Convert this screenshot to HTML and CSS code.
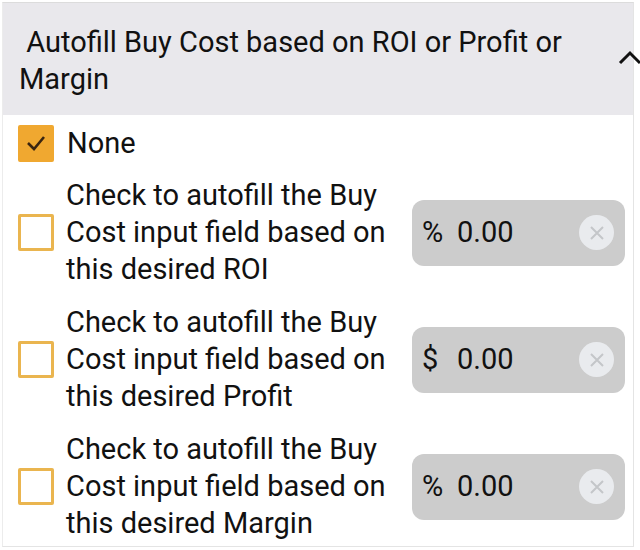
FILE: index.html
```html
<!DOCTYPE html>
<html>
<head>
<meta charset="utf-8">
<link rel="stylesheet" href="styles.css">
</head>
<body>
<div class="panel">
  <div class="header">
    <div class="title">&nbsp;Autofill Buy Cost based on ROI or Profit or Margin</div>
    <svg class="chev" width="26" height="18" viewBox="0 0 26 18"><path d="M2 15 L12 5 L22 15" fill="none" stroke="#111" stroke-width="3"/></svg>
  </div>
  <div class="body">
    <div class="none-row">
      <span class="box checked"><svg width="22" height="18" viewBox="0 0 22 18"><path d="M3 9 L9 15 L19 3" fill="none" stroke="#3a2510" stroke-width="2.6"/></svg></span>
      <span class="label">None</span>
    </div>
    <div class="row">
      <span class="box"></span>
      <div class="text">Check to autofill the Buy Cost input field based on this desired ROI</div>
      <div class="field"><span class="unit">%</span><span class="val">0.00</span><span class="clear"><svg width="16" height="16" viewBox="0 0 16 16"><path d="M2 2 L14 14 M14 2 L2 14" stroke="#c4c6c9" stroke-width="2"/></svg></span></div>
    </div>
    <div class="row">
      <span class="box"></span>
      <div class="text">Check to autofill the Buy Cost input field based on this desired Profit</div>
      <div class="field"><span class="unit">$</span><span class="val">0.00</span><span class="clear"><svg width="16" height="16" viewBox="0 0 16 16"><path d="M2 2 L14 14 M14 2 L2 14" stroke="#c4c6c9" stroke-width="2"/></svg></span></div>
    </div>
    <div class="row">
      <span class="box"></span>
      <div class="text">Check to autofill the Buy Cost input field based on this desired Margin</div>
      <div class="field"><span class="unit">%</span><span class="val">0.00</span><span class="clear"><svg width="16" height="16" viewBox="0 0 16 16"><path d="M2 2 L14 14 M14 2 L2 14" stroke="#c4c6c9" stroke-width="2"/></svg></span></div>
    </div>
  </div>
</div>
</body>
</html>
```
FILE: styles.css
```css
html, body {
  margin: 0;
  padding: 0;
  background: #fff;
  overflow: hidden;
}
body {
  font-family: Roboto, "Noto Sans", sans-serif;
  color: #111;
  font-size: 29px;
  line-height: 37px;
}
.panel {
  margin-top: 2px;
  margin-left: 2px;
  width: 630px;
  border-top: 1px solid #dcdcdc;
  border-left: 1px solid #ececec;
  border-right: 1px solid #e4e4e4;
  border-bottom: 1px solid #e4e4e4;
  height: 543px;
}
.header {
  background: #e9e8ec;
  display: flex;
  align-items: center;
  padding: 21px 0 17px 16px;
}
.title {
  width: 570px;
  flex: none;
}
.chev {
  margin-left: 29px;
  margin-right: -20px;
  margin-top: -8px;
  flex: none;
}
.body {
  padding: 8px 0 0 15px;
}
.none-row {
  display: flex;
  align-items: center;
  gap: 13px;
  height: 40px;
}
.box {
  width: 30px;
  height: 31px;
  border: 3px solid #eab54f;
  border-radius: 2px;
  flex: none;
  display: flex;
  align-items: center;
  justify-content: center;
  box-sizing: content-box;
}
.box.checked {
  background: #f0a830;
  border-color: #f0a830;
}
.row {
  display: flex;
  align-items: center;
  margin-top: 16px;
}
.none-row + .row {
  margin-top: 14px;
}
.row .box {
  margin-right: 12px;
}
.text {
  width: 334px;
  flex: none;
}
.field {
  margin-left: 12px;
  width: 213px;
  height: 66px;
  background: #cccccc;
  border-radius: 12px;
  display: flex;
  align-items: center;
  padding-left: 10px;
  box-sizing: border-box;
  flex: none;
}
.unit {
  width: 35px;
}
.val {
  flex: 1;
}
.clear {
  width: 35px;
  height: 35px;
  border-radius: 50%;
  background: #e9ebee;
  display: flex;
  align-items: center;
  justify-content: center;
  margin-right: 11px;
}
```
